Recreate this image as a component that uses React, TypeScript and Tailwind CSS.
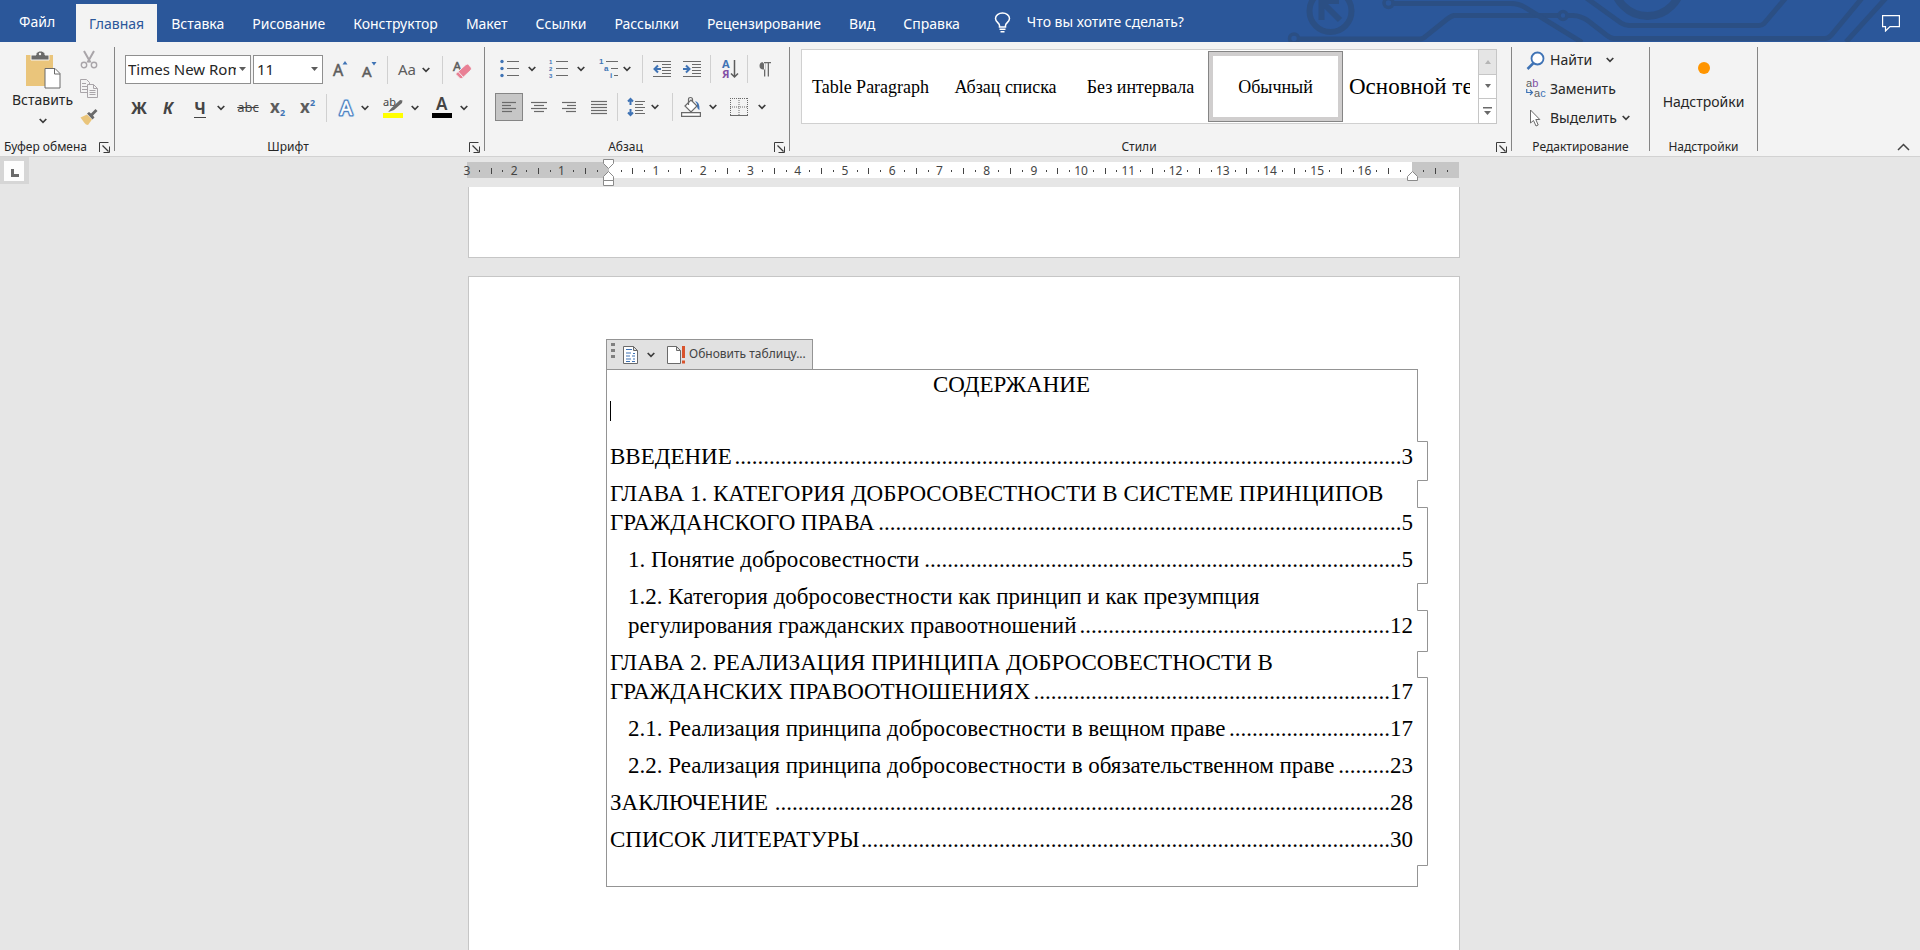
import type { ReactNode } from "react";

type TocRow = {
  first?: string;
  text: string;
  dots: number;
  page: number;
  nested?: boolean;
};

const tabs = [
  "Вставка",
  "Рисование",
  "Конструктор",
  "Макет",
  "Ссылки",
  "Рассылки",
  "Рецензирование",
  "Вид",
  "Справка",
];

const styleNames = ["Table Paragraph", "Абзац списка", "Без интервала"];

const toc: TocRow[] = [
  { text: "ВВЕДЕНИЕ", dots: 116, page: 3 },
  {
    first: "ГЛАВА 1. КАТЕГОРИЯ ДОБРОСОВЕСТНОСТИ В СИСТЕМЕ ПРИНЦИПОВ",
    text: "ГРАЖДАНСКОГО ПРАВА",
    dots: 91,
    page: 5,
  },
  { text: "1. Понятие добросовестности", dots: 83, page: 5, nested: true },
  {
    first: "1.2. Категория добросовестности как принцип и как презумпция",
    text: "регулирования гражданских правоотношений",
    dots: 54,
    page: 12,
    nested: true,
  },
  {
    first: "ГЛАВА 2. РЕАЛИЗАЦИЯ ПРИНЦИПА ДОБРОСОВЕСТНОСТИ В",
    text: "ГРАЖДАНСКИХ ПРАВООТНОШЕНИЯХ",
    dots: 62,
    page: 17,
  },
  {
    text: "2.1. Реализация принципа добросовестности в вещном праве",
    dots: 28,
    page: 17,
    nested: true,
  },
  {
    text: "2.2. Реализация принципа добросовестности в обязательственном праве",
    dots: 9,
    page: 23,
    nested: true,
  },
  { text: "ЗАКЛЮЧЕНИЕ", dots: 107, page: 28 },
  { text: "СПИСОК ЛИТЕРАТУРЫ", dots: 92, page: 30 },
];

// ruler runs from -3 cm to 18 cm, one cell per centimetre
const rulerCells = Array.from({ length: 21 }, (_, i) => i - 3);

function Chevron() {
  return (
    <svg width="8" height="6" viewBox="0 0 8 6" className="shrink-0" fill="none" stroke="#3b3b3b" strokeWidth="1.7">
      <path d="M.7 1 4 4.3 7.3 1" />
    </svg>
  );
}

function Tool({
  label,
  className,
  children,
}: {
  label: string;
  className: string;
  children: ReactNode;
}) {
  return (
    <button
      type="button"
      aria-label={label}
      className={`flex h-7 shrink-0 items-center justify-center [&_svg]:overflow-visible ${className}`}
    >
      {children}
    </button>
  );
}

function Divider({ className = "" }: { className?: string }) {
  return <div className={`h-7 w-px shrink-0 bg-[#d0d0d0] ${className}`} />;
}

function Group({
  title,
  launcher,
  className,
  children,
}: {
  title: string;
  launcher?: boolean;
  className: string;
  children: ReactNode;
}) {
  return (
    <section className={`flex h-[114px] shrink-0 ${className}`}>
      <div className="flex min-w-0 flex-1 flex-col">
        <div className="h-[97px]">{children}</div>
        <div className="flex h-4 items-center">
          <span className="flex-1 text-center text-xs leading-4 whitespace-nowrap">{title}</span>
          {launcher && (
            <button type="button" aria-label={`Параметры: ${title}`} className="mr-1 ml-2">
              <svg width="11" height="11" viewBox="0 0 11 11" fill="none" stroke="#3b3b3b">
                <path d="M.5 10V.5H9.500M10.500 4.500v6h-6" />
                <path d="m3.500 3.500 6 6" strokeWidth="1.300" />
              </svg>
            </button>
          )}
        </div>
      </div>
      <div className="my-[5px] w-px bg-[#858585]" />
    </section>
  );
}

function Lines({ rows }: { rows: [number, number][] }) {
  const top = rows.length > 4 ? 2.5 : 3.5;
  return (
    <svg width="18" height="16" viewBox="0 0 18 16" stroke="#6a6a6a" strokeWidth="1.200">
      {rows.map(([from, to], i) => (
        <path key={i} d={`M${from} ${i * 3 + top}H${to}`} />
      ))}
    </svg>
  );
}

function Header() {
  return (
    <header className="relative flex h-[42px] items-end bg-[#2b579a] text-sm leading-5 text-white">
      <svg
        viewBox="1280 0 640 42"
        className="absolute top-0 right-0 h-[42px] w-[640px]"
        fill="none"
        stroke="#2b4f84"
        strokeWidth="5"
      >
        <circle cx="1330.500" cy="11" r="21" strokeWidth="6" />
        <path d="M1321.500 20V-2M1320 1h19M1323 3l17 17" strokeWidth="6" />
        <circle cx="1294" cy="38.500" r="4.500" strokeWidth="3.500" />
        <path d="M1298 39h122q3 0 6-3l20-16q5-4 8-4.500h104" />
        <circle cx="1563" cy="15.500" r="4" strokeWidth="3.500" />
        <path d="M1567 15.500h6q8 0 16 6l18 14q4 3 7 3h211q3 0 6-3l34-41" />
        <circle cx="1388.500" cy="3" r="4.500" strokeWidth="3.500" />
        <path d="M1393 3.500h118q8 0 14 4l57 35" />
        <path d="M1585-3l36 26q4 2.500 8 2.500h130q3 0 5-2l23-27M1846 42l40-44" />
        <circle cx="1647.500" cy="-18" r="34" strokeWidth="8" />
      </svg>
      <button type="button" className="relative h-[38px] pr-[21px] pb-[2px] pl-[19px]">
        Файл
      </button>
      <button type="button" className="relative h-[38px] w-[81px] bg-[#f3f3f3] pt-px text-[#2b579a]">
        Главная
      </button>
      <nav className="relative flex gap-7 pl-[14px]">
        {tabs.map((tab) => (
          <button key={tab} type="button" className="h-[38px] pt-px">
            {tab}
          </button>
        ))}
      </nav>
      <label className="relative flex h-[38px] items-center gap-4 pb-[2px] pl-[34px]">
        <svg width="17" height="21" viewBox="0 0 17 21" fill="none" stroke="#fff" strokeWidth="1.500">
          <path d="M5.500 15v-1.500C5.500 11 1.500 10 1.500 6.500a7 5.500 0 0 1 14 0C15.500 10 11.500 11 11.500 13.500V15zM5.500 17.200h6M6.500 19.700h4" />
        </svg>
        <input
          type="text"
          aria-label="Что вы хотите сделать?"
          placeholder="Что вы хотите сделать?"
          className="w-[170px] bg-transparent outline-none placeholder:text-white placeholder:opacity-100"
        />
      </label>
      <button type="button" aria-label="Примечания" className="relative mr-5 mb-[10px] ml-auto">
        <svg width="18" height="17" viewBox="0 0 18 17" fill="none" stroke="#fff" strokeWidth="1.200">
          <path d="M.6.600h16.800v11H8L3.500 16v-4.400H.6z" />
        </svg>
      </button>
    </header>
  );
}

function ClipboardGroup() {
  return (
    <Group title="Буфер обмена" launcher className="w-[115px]">
      <div className="flex pt-2 pl-[10px]">
        <button type="button" className="flex w-[65px] flex-col items-center text-sm leading-5">
          <svg width="36" height="40" viewBox="0 0 36 40">
            <path d="M1 5h27v31H1z" fill="#eac57b" />
            <path d="M6 10V5h5V3l3-2h3l3 2v2h4v5z" fill="#6a6a6a" stroke="#f3f3f3" />
            <circle cx="15" cy="4" r="1.200" fill="#f3f3f3" />
            <path d="M20 18.500h10l5 5V38H20z" fill="#fff" stroke="#6a6a6a" />
            <path d="M29.500 18.500V24H35" fill="none" stroke="#6a6a6a" />
          </svg>
          <span className="mb-2">Вставить</span>
          <Chevron />
        </button>
        <div className="ml-[5px] flex flex-col gap-[10px]">
          <button type="button" aria-label="Вырезать">
            <svg width="18" height="19" viewBox="0 0 18 19" fill="none" stroke="#a9a5a9" strokeWidth="1.400">
              <path d="m4 1 6.500 11.500M14 1 7.500 12.500" strokeWidth="2" />
              <circle cx="4" cy="15" r="2.700" />
              <circle cx="14" cy="15" r="2.700" />
            </svg>
          </button>
          <button type="button" aria-label="Копировать">
            <svg width="18" height="19" viewBox="0 0 18 19" fill="#f3f3f3" stroke="#a9a5a9">
              <path d="M.5.500h6l3 3v10h-9zM2 4.500h4M2 7.500h5M2 10.500h5" />
              <path d="M7.500 5.500h6l4 4v9h-10zM13.500 5.500v4h4M9.500 11.500h6M9.500 13.500h6M9.500 15.500h6" />
            </svg>
          </button>
          <button type="button" aria-label="Формат по образцу">
            <svg width="18" height="18" viewBox="0 0 18 18">
              <path d="M.5 9.500 7 6.500l5 5-4 5.500-2-.5-1.500-1.500z" fill="#eac57b" />
              <path d="m7 5.500 2-1.500 2 1.500L15.500 1l2 2L13 7.500l1.500 2L12.500 11.500z" fill="#6a6a6a" />
            </svg>
          </button>
        </div>
      </div>
    </Group>
  );
}

function FontGroup() {
  return (
    <Group title="Шрифт" launcher className="w-[370px]">
      <div className="flex items-center pt-[13px] pl-[10px]">
        <div className="relative">
          <select
            aria-label="Шрифт"
            className="h-[29px] w-[126px] appearance-none border border-[#8f8f8f] bg-white pr-[14px] pl-[2px] text-[15px] text-[#262626]"
          >
            <option>Times New Roman</option>
          </select>
          <svg width="7" height="4" className="absolute top-3 right-[5px]">
            <path d="M0 0h7L3.500 4z" fill="#5c5c5c" />
          </svg>
        </div>
        <div className="relative ml-[2px]">
          <select
            aria-label="Размер шрифта"
            className="h-[29px] w-[70px] appearance-none border border-[#8f8f8f] bg-white pl-[3px] text-[15px] text-[#262626]"
          >
            <option>11</option>
          </select>
          <svg width="7" height="4" className="absolute top-3 right-[5px]">
            <path d="M0 0h7L3.500 4z" fill="#5c5c5c" />
          </svg>
        </div>
        <Tool label="Увеличить размер шрифта" className="ml-1 w-7">
          <svg width="16" height="18" viewBox="0 0 16 18">
            <text x="0" y="15" fontSize="16" fill="#5c5c5c" stroke="#5c5c5c" strokeWidth=".5">A</text>
            <path d="M9.500 3.500 12 0l2.500 3.500z" fill="#3f73b5" />
          </svg>
        </Tool>
        <Tool label="Уменьшить размер шрифта" className="w-[30px]">
          <svg width="16" height="18" viewBox="0 0 16 18">
            <text x="0" y="16" fontSize="15" fill="#5c5c5c" stroke="#5c5c5c" strokeWidth=".5">A</text>
            <path d="M9.500 1 12 4.500 14.500 1z" fill="#3f73b5" />
          </svg>
        </Tool>
        <Divider className="ml-[2px]" />
        <Tool label="Регистр" className="w-[52px] gap-[6px] text-[15px] text-[#5c5c5c]">
          Aa
          <Chevron />
        </Tool>
        <Divider className="ml-[2px]" />
        <Tool label="Удалить форматирование" className="ml-[5px] w-7">
          <svg width="20" height="22" viewBox="0 0 20 22">
            <text x="1" y="12" fontSize="13" fill="#5c5c5c" stroke="#5c5c5c" strokeWidth=".5">A</text>
            <path d="m4.500 14 9.500-8.500q1.500-1 2.500 0l2.500 3q1 1.500 0 2.500l-9 8.500q-1 .7-2 0l-4-4q-.5-1 .5-1.500z" fill="#e98095" stroke="#f3f3f3" />
            <path d="m6 12.500 5.500 6" stroke="#f3f3f3" />
          </svg>
        </Tool>
      </div>
      <div className="flex items-center pt-[10px] pl-4 text-[#444]">
        <Tool label="Полужирный" className="w-4 text-base font-bold">Ж</Tool>
        <Tool label="Курсив" className="ml-[15px] w-3 text-base font-bold italic">К</Tool>
        <Tool label="Подчеркнутый" className="ml-[18px] w-[35px] gap-[11px] text-base font-bold">
          <span className="border-b border-[#444] leading-[18px]">Ч</span>
          <Chevron />
        </Tool>
        <Tool label="Зачеркнутый" className="ml-[11px] w-5 text-[13px] line-through">abc</Tool>
        <Tool label="Подстрочный знак" className="ml-3 w-4 text-[#444]">
          <svg width="16" height="20" viewBox="0 0 16 20" fontWeight="bold">
            <text x="0" y="15" fontSize="17" fill="#5c5c5c">x</text>
            <text x="10" y="18" fontSize="9" fill="#3f73b5">2</text>
          </svg>
        </Tool>
        <Tool label="Надстрочный знак" className="ml-[14px] w-4">
          <svg width="16" height="20" viewBox="0 0 16 20" fontWeight="bold">
            <text x="0" y="15" fontSize="17" fill="#5c5c5c">x</text>
            <text x="10" y="8" fontSize="9" fill="#3f73b5">2</text>
          </svg>
        </Tool>
        <Divider className="ml-[10px]" />
        <Tool label="Текстовые эффекты" className="ml-[10px] w-8 gap-[6px]">
          <svg width="18" height="20" viewBox="0 0 18 20" strokeLinejoin="round">
            <text x="3" y="17" fontSize="19" fill="#fff" stroke="#a9cbee" strokeWidth="4">A</text>
            <text x="3" y="17" fontSize="19" fill="#fff" stroke="#3f73b5" strokeWidth="2.500">A</text>
            <text x="3" y="17" fontSize="19" fill="#fff" stroke="#fff" strokeWidth=".5">A</text>
          </svg>
          <Chevron />
        </Tool>
        <Tool label="Цвет выделения" className="ml-[14px] w-9 gap-[8px]">
          <svg width="20" height="20" viewBox="0 0 20 20">
            <text x="0" y="8" fontSize="11" fill="#444">ab</text>
            <path d="m5.500 13.500 3-3.500L17 2l2.500.5L19 5l-8 7-5.500 2z" fill="#6a6a6a" />
            <path d="M0 15h20v5H0z" fill="#ff0" />
          </svg>
          <Chevron />
        </Tool>
        <Tool label="Цвет текста" className="ml-[13px] w-9 gap-[8px]">
          <svg width="20" height="20" viewBox="0 0 20 20">
            <text x="4" y="12" fontSize="17" fontWeight="600" fill="#444">A</text>
            <path d="M0 15h20v5H0z" fill="#000" />
          </svg>
          <Chevron />
        </Tool>
      </div>
    </Group>
  );
}

function ParagraphGroup() {
  return (
    <Group title="Абзац" launcher className="w-[305px]">
      <div className="flex items-center pt-[13px] pl-[15px]">
        <Tool label="Маркеры" className="w-9 gap-[9px]">
          <svg width="19" height="18" viewBox="0 0 19 18" stroke="#6a6a6a" fill="#3f73b5">
            <path d="M7 1.500h12M7 8.500h12M7 15.500h12" />
            <g stroke="none">
              <circle cx="2" cy="1.500" r="1.700" />
              <circle cx="2" cy="8.500" r="1.700" />
              <circle cx="2" cy="15.500" r="1.700" />
            </g>
          </svg>
          <Chevron />
        </Tool>
        <Tool label="Нумерация" className="ml-[13px] w-9 gap-[9px]">
          <svg width="19" height="20" viewBox="0 0 19 20" stroke="#6a6a6a">
            <path d="M7 2.500h12M7 9.500h12M7 16.500h12" />
            <g
              stroke="none"
              fill="#3f73b5"
              fontSize="6"
              fontWeight="bold"
              className="font-['Liberation_Sans',sans-serif]"
            >
              <text x="0" y="5">1</text>
              <text x="0" y="12">2</text>
              <text x="0" y="19">3</text>
            </g>
          </svg>
          <Chevron />
        </Tool>
        <Tool label="Многоуровневый список" className="ml-[13px] w-[34px] gap-[5px]">
          <svg width="19" height="20" viewBox="0 0 19 20" stroke="#6a6a6a">
            <path d="M7 2.500h12M12 9.500h7M15 16.500h4" />
            <g
              stroke="none"
              fill="#3f73b5"
              fontSize="8"
              fontWeight="bold"
              className="font-['Liberation_Sans',sans-serif]"
            >
              <text x="0" y="5">1</text>
              <text x="5" y="12">a</text>
              <text x="11" y="19">i</text>
            </g>
          </svg>
          <Chevron />
        </Tool>
        <Divider className="ml-[10px]" />
        <Tool label="Уменьшить отступ" className="ml-[5px] w-7">
          <svg width="18" height="17" viewBox="0 0 18 17" stroke="#6a6a6a" fill="none">
            <path d="M0 .5h18M9 3.500h9M9 6.500h9M9 9.500h9M9 12.500h9M0 15.500h18" />
            <path d="M8 8H1.500M5 4.500 1.500 8 5 11.500" stroke="#3f73b5" strokeWidth="2" />
          </svg>
        </Tool>
        <Tool label="Увеличить отступ" className="ml-[2px] w-7">
          <svg width="18" height="17" viewBox="0 0 18 17" stroke="#6a6a6a" fill="none">
            <path d="M0 .5h18M9 3.500h9M9 6.500h9M9 9.500h9M9 12.500h9M0 15.500h18" />
            <path d="M0 8h6.500M3 4.500 6.500 8 3 11.500" stroke="#3f73b5" strokeWidth="2" />
          </svg>
        </Tool>
        <Divider className="ml-[4px]" />
        <Tool label="Сортировка" className="ml-[5px] w-7">
          <svg width="17" height="20" viewBox="0 0 17 20" fontWeight="bold" fontSize="11">
            <text x="0" y="9" fill="#3f73b5">А</text>
            <text x="0" y="19" fill="#8250a5">Я</text>
            <path d="M12.500 1v17M9 14.500l3.500 3.500 3.500-3.500" fill="none" stroke="#5c5c5c" strokeWidth="1.500" />
          </svg>
        </Tool>
        <Divider className="ml-[3px]" />
        <Tool label="Отобразить все знаки" className="ml-[3px] w-7">
          <svg width="12" height="17" viewBox="0 0 12 17" fill="#6a6a6a">
            <path d="M6 1H4.500a4 3.800 0 0 0 0 7.600H6zM4 1h8v1.200H4zM5 1h1.300v14.500H5zM8.700 1H10v14.500H8.700z" />
          </svg>
        </Tool>
      </div>
      <div className="flex items-center pt-[10px] pl-[10px]">
        <Tool label="По левому краю" className="w-7 border border-[#858585] bg-[#c6c6c6]">
          <Lines rows={[[2, 16], [2, 11], [2, 16], [2, 12]]} />
        </Tool>
        <Tool label="По центру" className="ml-[2px] w-7">
          <Lines rows={[[1, 17], [4, 14], [1, 17], [4, 14]]} />
        </Tool>
        <Tool label="По правому краю" className="ml-[2px] w-7">
          <Lines rows={[[2, 16], [7, 16], [2, 16], [6, 16]]} />
        </Tool>
        <Tool label="По ширине" className="ml-[2px] w-7">
          <Lines rows={[[1, 17], [1, 17], [1, 17], [1, 17], [1, 17]]} />
        </Tool>
        <Divider className="ml-[4px]" />
        <Tool label="Интервал" className="ml-[9px] w-8 gap-[6px]">
          <svg width="18" height="20" viewBox="0 0 18 20" stroke="#6a6a6a" fill="none">
            <path d="M8 4.500h10M8 7.500h8M8 10.500h10M8 13.500h8M8 16.500h10" />
            <path d="M3.500 8V2M1 4.500 3.500 2 6 4.500M3.500 12v6M1 15.500 3.500 18 6 15.500" stroke="#3f73b5" strokeWidth="2" />
          </svg>
          <Chevron />
        </Tool>
        <Divider className="ml-[13px]" />
        <Tool label="Заливка" className="ml-[8px] w-9 gap-[8px]">
          <svg width="20" height="20" viewBox="0 0 20 20" fill="none" stroke="#6a6a6a" strokeWidth="1.200">
            <path d="M14 4q5 1 4.500 9-3-1-2.500-6z" fill="#3f73b5" stroke="none" />
            <path d="m4 9 6-6 6 6-6 6z" fill="#fff" />
            <path d="M7.500 8V2.500q0-2 2-2t2 2V5" />
            <path d="M.6 15.600h18.800v3.800H.6z" fill="#fff" />
          </svg>
          <Chevron />
        </Tool>
        <Tool label="Границы" className="ml-3 w-[38px] gap-[10px]">
          <svg width="18" height="18" viewBox="0 0 18 18" fill="none" stroke="#6a6a6a">
            <path d="M0 .5h18M.5 0v18M17.500 0v18M9 0v18M0 9h18" strokeDasharray="1 1" />
            <path d="M0 17.500h18" />
          </svg>
          <Chevron />
        </Tool>
      </div>
    </Group>
  );
}

function StylesGroup() {
  return (
    <Group title="Стили" launcher className="w-[722px]">
      <div className="pt-[7px] pl-[11px] font-['Liberation_Serif','Times_New_Roman',serif] text-lg text-black">
        <div className="flex h-[75px] w-[696px] border border-[#d0d0d0] bg-white pl-px">
          {styleNames.map((name) => (
            <button key={name} type="button" className="w-[135px] shrink-0 whitespace-nowrap">
              {name}
            </button>
          ))}
          <button
            type="button"
            className="my-px w-[135px] shrink-0 border border-[#858585] bg-white inset-ring-4 inset-ring-[#d0cece]"
          >
            Обычный
          </button>
          <button type="button" className="min-w-0 flex-1 pr-2 pl-[6px] text-left text-[23px]">
            <span className="block overflow-hidden whitespace-nowrap">Основной текст</span>
          </button>
          <div className="-my-px -mr-px grid w-[19px] shrink-0 grid-rows-3 border border-[#c6c6c6]">
            <button type="button" aria-label="Вверх" className="flex items-center justify-center bg-[#e5e5e5]">
              <svg width="6" height="4"><path d="M0 4h6L3 0z" fill="#b5b5b5" /></svg>
            </button>
            <button type="button" aria-label="Вниз" className="flex items-center justify-center border-y border-[#c6c6c6]">
              <svg width="6" height="4"><path d="M0 0h6L3 4z" fill="#6a6a6a" /></svg>
            </button>
            <button type="button" aria-label="Все стили" className="flex items-center justify-center">
              <svg width="9" height="8"><path d="M0 0h9v1.500H0zM1 4h7L4.500 8z" fill="#6a6a6a" /></svg>
            </button>
          </div>
        </div>
      </div>
    </Group>
  );
}

function EditingGroup() {
  return (
    <Group title="Редактирование" className="w-[138px]">
      <div className="flex flex-col gap-px pt-1 pl-[14px] text-sm [&_svg]:overflow-visible">
        <button type="button" className="flex h-7 items-center gap-[5px]">
          <svg width="19" height="19" viewBox="0 0 19 19" fill="none" stroke="#3f73b5">
            <circle cx="11.500" cy="7.500" r="6" strokeWidth="1.800" fill="#fff" />
            <path d="m7.500 12-6 6" strokeWidth="2.500" />
          </svg>
          <span className="mr-[9px]">Найти</span>
          <Chevron />
        </button>
        <button type="button" className="flex h-7 items-center gap-[5px]">
          <svg width="19" height="20" viewBox="0 0 19 20" fontSize="11" className="font-['Liberation_Sans',sans-serif]">
            <text x="0" y="8" fill="#5c5c5c">
              a<tspan fill="#8250a5">b</tspan>
            </text>
            <text x="8" y="18" fill="#5c5c5c">
              a<tspan fill="#3f73b5">c</tspan>
            </text>
            <path d="M.7 10v3.500h5.500M4 11l2.500 2.500L4 16" fill="none" stroke="#3f73b5" strokeWidth="1.200" />
          </svg>
          <span>Заменить</span>
        </button>
        <button type="button" className="flex h-7 items-center gap-[5px]">
          <svg width="19" height="18" viewBox="0 0 19 18" fill="#fff" stroke="#6a6a6a">
            <path d="M4.500 1v13l3-2.500 2.500 5.500 2.200-1L9.800 10.500h4z" />
          </svg>
          <span>Выделить</span>
          <Chevron />
        </button>
      </div>
    </Group>
  );
}

function Ribbon() {
  return (
    <div className="flex border-b border-[#d2d2d2] bg-[#f3f3f3] text-[#262626]">
      <ClipboardGroup />
      <FontGroup />
      <ParagraphGroup />
      <StylesGroup />
      <EditingGroup />
      <Group title="Надстройки" className="w-[108px]">
        <button type="button" className="flex w-full flex-col items-center pt-5 text-sm leading-5">
          <span className="mb-[18px] h-3 w-3 rounded-full bg-[#ff9500]" />
          Надстройки
        </button>
      </Group>
      <button type="button" aria-label="Свернуть ленту" className="mt-auto mr-[10px] mb-[5px] ml-auto">
        <svg width="13" height="8" viewBox="0 0 13 8" fill="none" stroke="#444" strokeWidth="1.500">
          <path d="m1 7 5.500-5.500L12 7" />
        </svg>
      </button>
    </div>
  );
}

function Ruler() {
  return (
    <div className="flex h-[30px]">
      <div className="h-[27px] w-[29px] bg-[#d6d6d6] pt-1 pl-1">
        <button type="button" aria-label="Табуляция" className="flex h-5 w-5 items-center justify-center bg-[#fdfdfd] pt-1 pl-px">
          <svg width="8" height="8"><path d="M0 0h3v5h5v3H0z" fill="#6a6a6a" /></svg>
        </button>
      </div>
      <div className="flex-1 pt-[5px] pr-[23px]">
        <div className="relative mx-auto flex h-4 w-[992px] text-xs leading-[17px] text-[#444]">
          {rulerCells.map((cm) => (
            <div
              key={cm}
              className={`relative flex-1 ${cm < 0 || cm > 16 ? "bg-[#c6c6c6]" : "bg-white"}`}
            >
              {cm !== 0 && cm < 17 && (
                <span className="absolute -left-3 z-10 w-6 text-center">{Math.abs(cm)}</span>
              )}
              <i className="absolute top-2 left-1/4 h-[2px] w-px bg-[#444]" />
              <i className="absolute top-[6px] left-1/2 h-[6px] w-px bg-[#444]" />
              <i className="absolute top-2 left-3/4 h-[2px] w-px bg-[#444]" />
            </div>
          ))}
          <svg width="12" height="28" className="absolute -top-[3px] left-[136px] z-10" fill="#fff" stroke="#8a8a8a">
            <path d="M.5.500h10v4L5.500 9.500l-5-5zM5.500 12.500l5 5v4H.5v-4zM.5 21.500h10v5H.5z" />
          </svg>
          <svg width="12" height="11" className="absolute top-[9px] left-[940px] z-10" fill="#fff" stroke="#8a8a8a">
            <path d="m5.500.500 5 5v4H.5v-4z" />
          </svg>
        </div>
      </div>
    </div>
  );
}

function Contents() {
  return (
    <div className="flex flex-col items-start">
      <div className="flex h-[30px] w-[207px] items-center border border-b-0 border-[#949494] bg-[#e1e1e1] pl-1 text-[#444]">
        <svg width="4" height="15" className="mt-[3px] self-start">
          <path d="M0 0h4v3H0zM0 6h4v3H0zM0 12h4v3H0z" fill="#808080" />
        </svg>
        <button type="button" aria-label="Оглавление" className="ml-2 flex items-center gap-[8px]">
          <svg width="16" height="18" viewBox="0 0 16 18" fill="#fff" stroke="#6a6a6a">
            <path d="M.5.500h10l4 4v13H.5zM10.500.500v4h4" />
            <path d="M3 3.500h6M3 7h5M3 10h4M3 13h5M3 15.500h4M10 7.500h2M9 10h3M10 13h2M9 15.500h3" stroke="#3f73b5" />
          </svg>
          <Chevron />
        </button>
        <button type="button" className="ml-3 flex items-start gap-1 text-xs leading-4 whitespace-nowrap">
          <svg width="18" height="18" viewBox="0 0 18 18" fill="#fff" stroke="#6a6a6a">
            <path d="M.5.500h9l4 4v13H.5zM9.500.500v4h4" />
            <path d="M15 0h3v12h-3zM15 14.500h3v3h-3z" fill="#d9532c" stroke="none" />
          </svg>
          Обновить таблицу...
        </button>
      </div>
      <div className="relative h-[518px] w-full border border-r-0 border-[#949494] pr-[5px] pl-[3px] font-['Liberation_Serif','Times_New_Roman',serif] text-[23px] leading-[29px] text-black">
        <h1 className="text-center">СОДЕРЖАНИЕ</h1>
        <div className="mb-4 h-[27px] pt-[2px]">
          <div className="h-5 w-px bg-black" />
        </div>
        <div className="flex flex-col gap-2">
          {toc.map((row) => (
            <a
              key={row.text}
              href="#"
              className={`block whitespace-nowrap ${row.nested ? "pl-[18px]" : ""}`}
            >
              {row.first && <span className="block">{row.first}</span>}
              <span className="flex justify-between">
                <span>{row.text}</span>
                <span>
                  {".".repeat(row.dots)}
                  {row.page}
                </span>
              </span>
            </a>
          ))}
        </div>
        {/* right edge steps outwards beside the lines that reach the margin */}
        <svg
          width="12"
          height="518"
          className="absolute -top-px -right-[11px]"
          fill="none"
          stroke="#949494"
        >
          <path d="M.5 0V72.500H10.500V111.500H.5V138.500H10.500V214.500H.5V241.500H10.500V282.500H.5V308.500H10.500V496.500H.5V518" />
        </svg>
      </div>
    </div>
  );
}

export default function App() {
  return (
    <div className="flex min-h-screen flex-col bg-[#e6e6e6] font-['Noto_Sans','Open_Sans',sans-serif]">
      <Header />
      <Ribbon />
      <Ruler />
      <main className="flex flex-1 flex-col items-center gap-[18px] pl-2">
        <div className="h-[71px] w-[992px] border border-t-0 border-[#c6c6c6] bg-white" />
        <article className="w-[992px] flex-1 border border-b-0 border-[#c6c6c6] bg-white pt-[62px] pr-[41px] pb-[63px] pl-[137px]">
          <Contents />
        </article>
      </main>
    </div>
  );
}
